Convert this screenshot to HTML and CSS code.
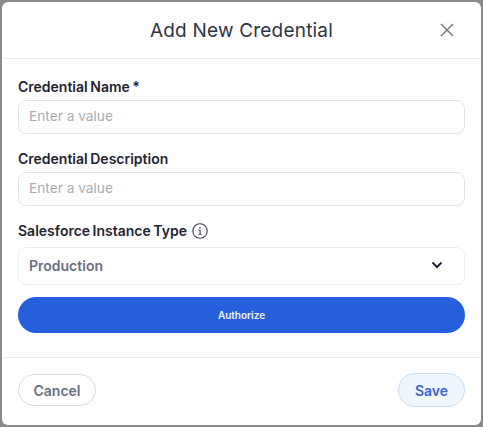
FILE: index.html
```html
<!DOCTYPE html>
<html lang="en">
<head>
    <meta charset="UTF-8">
    <title>Add New Credential</title>
    <link rel="stylesheet" href="styles.css">
</head>
<body>

    <div class="modal">
        <!-- Header -->
        <div class="modal-header">
            <h1>Add New Credential</h1>
            <button class="close-btn" aria-label="Close">
                <svg width="14" height="14" viewBox="0 0 14 14"><path d="M1 1L13 13M13 1L1 13" stroke="#6b7280" stroke-width="1.4" fill="none"/></svg>
            </button>
        </div>

        <!-- Form -->
        <div class="modal-body">
            <label class="field-label" for="cred-name">Credential Name *</label>
            <input class="text-input" type="text" id="cred-name" placeholder="Enter a value">

            <label class="field-label" for="cred-desc">Credential Description</label>
            <input class="text-input" type="text" id="cred-desc" placeholder="Enter a value">

            <div class="field-label select-label">
                Salesforce Instance Type
                <svg class="info-icon" width="16" height="16" viewBox="0 0 16 16">
                    <circle cx="8" cy="8" r="7.2" stroke="#374151" stroke-width="1.1" fill="none"/>
                    <path d="M6.6 7.3H8.1V11.3M6.5 11.3H9.6" stroke="#374151" stroke-width="1.1" fill="none"/>
                    <circle cx="7.9" cy="4.9" r="0.8" fill="#374151"/>
                </svg>
            </div>
            <div class="select-box">
                <span>Production</span>
                <svg width="12" height="8" viewBox="0 0 12 8"><path d="M1.5 1.5L6 6L10.5 1.5" stroke="#1f2937" stroke-width="2" fill="none"/></svg>
            </div>

            <button class="authorize-btn">Authorize</button>
        </div>

        <!-- Footer -->
        <div class="modal-footer">
            <button class="cancel-btn">Cancel</button>
            <button class="save-btn">Save</button>
        </div>
    </div>

</body>
</html>
```

FILE: styles.css
```css
* {
    margin: 0;
    padding: 0;
    box-sizing: border-box;
    font-family: 'Inter', sans-serif;
}

body {
    width: 483px;
    height: 427px;
    background-color: #8a8a8a;
    padding: 2px;
    overflow: hidden;
}

.modal {
    height: 423px;
    background-color: #fff;
    border-radius: 6px;
    display: flex;
    flex-direction: column;
}

/* Header */
.modal-header {
    height: 57px;
    flex-shrink: 0;
    display: flex;
    align-items: center;
    justify-content: center;
    position: relative;
    border-bottom: 1px solid #e9ebef;
}

.modal-header h1 {
    font-size: 19px;
    font-weight: 400;
    letter-spacing: 0.2px;
    color: #2f3542;
}

.close-btn {
    position: absolute;
    top: 21px;
    right: 27px;
    width: 14px;
    height: 14px;
    background: none;
    border: none;
    display: flex;
}

/* Form */
.modal-body {
    padding: 19px 16px 0;
    display: flex;
    flex-direction: column;
    flex: 1;
}

.field-label {
    display: flex;
    align-items: center;
    gap: 5px;
    height: 17px;
    font-size: 14px;
    font-weight: 600;
    word-spacing: -1px;
    color: #1f2430;
    margin-bottom: 5px;
}

.select-label {
    margin-bottom: 8px;
}

.text-input {
    width: 100%;
    height: 34px;
    padding: 0 10px 2px;
    font-size: 13.7px;
    border: 1px solid #dfe4ec;
    border-radius: 8px;
    outline: none;
    margin-bottom: 16px;
}

.text-input::placeholder {
    color: #a9adb5;
}

.select-box {
    height: 38px;
    padding: 0 21px 2px 10px;
    display: flex;
    align-items: center;
    justify-content: space-between;
    font-size: 14px;
    font-weight: 600;
    color: #6b7080;
    border: 1px solid #eceef2;
    border-radius: 8px;
    margin-bottom: 12px;
}

.authorize-btn {
    height: 36px;
    font-size: 10px;
    font-weight: 600;
    color: #f1f4ff;
    background: #255fdb;
    border: none;
    border-radius: 18px;
}

/* Footer */
.modal-footer {
    height: 68px;
    flex-shrink: 0;
    padding: 0 16px 3px;
    display: flex;
    align-items: center;
    justify-content: space-between;
    border-top: 1px solid #e9ebef;
}

.cancel-btn {
    width: 78px;
    height: 32px;
    font-size: 14px;
    font-weight: 600;
    color: #6b7080;
    background: #fff;
    border: 1px solid #d8dadf;
    border-radius: 16px;
}

.save-btn {
    width: 67px;
    height: 34px;
    font-size: 14px;
    font-weight: 600;
    color: #3a64d0;
    background: #eff6fe;
    border: 1px solid #c5dcfa;
    border-radius: 17px;
}
```
